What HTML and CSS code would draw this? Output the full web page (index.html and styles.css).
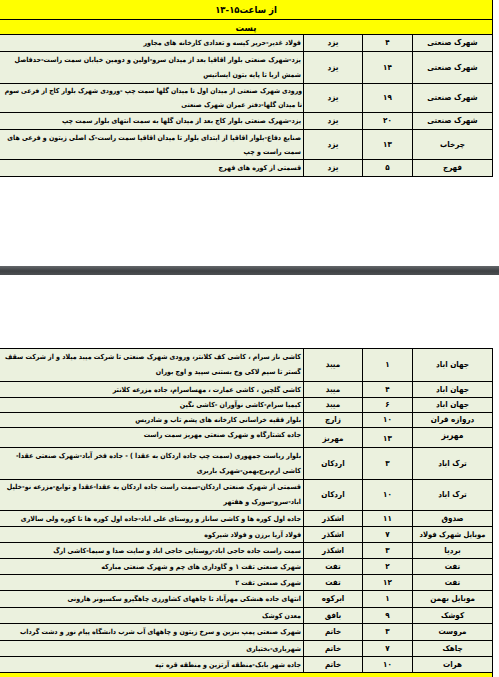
FILE: index.html
```html
<!DOCTYPE html>
<html lang="fa">
<head>
<meta charset="utf-8">
<link rel="stylesheet" href="styles.css">
</head>
<body>
<section class="upper">
  <div class="sheet">
    <div class="row band h20"><span>از ساعت۱۵-۱۳</span></div>
    <div class="row band h15"><span>پست</span></div>
    <div class="row h17"><div class="cell">شهرک صنعتی</div><div class="cell num">۴</div><div class="cell">یزد</div><div class="cell desc"><span>فولاد غدیر-حریر کیسه و تعدادی کارخانه های مجاور</span></div></div>
    <div class="row h32 two"><div class="cell">شهرک صنعتی</div><div class="cell num">۱۴</div><div class="cell">یزد</div><div class="cell desc"><span>یزد-شهرک صنعتی بلوار اقاقیا بعد از میدان سرو-اولین و دومین خیابان سمت راست-حدفاصل<br>شمش اریا تا پایه بتون ایساتیس</span></div></div>
    <div class="row h29 two"><div class="cell">شهرک صنعتی</div><div class="cell num">۱۹</div><div class="cell">یزد</div><div class="cell desc tight"><span>ورودی شهرک صنعتی از میدان اول تا میدان گلها سمت چپ -ورودی شهرک بلوار کاج از فرعی سوم<br>تا میدان گلها-دفتر عمران شهرک صنعتی</span></div></div>
    <div class="row h17"><div class="cell">شهرک صنعتی</div><div class="cell num">۲۰</div><div class="cell">یزد</div><div class="cell desc"><span>یزد-شهرک صنعتی بلوار کاج بعد از میدان گلها  به سمت انتهای بلوار سمت چپ</span></div></div>
    <div class="row h30 two"><div class="cell">چرخاب</div><div class="cell num">۱۳</div><div class="cell">یزد</div><div class="cell desc"><span>صنایع دفاع-بلوار اقاقیا از ابتدای بلوار تا میدان اقاقیا سمت راست-ک اصلی زیتون و فرعی های<br>سمت راست و چپ</span></div></div>
    <div class="row h17"><div class="cell">فهرج</div><div class="cell num">۵</div><div class="cell">یزد</div><div class="cell desc"><span>قسمتی از کوره های فهرج</span></div></div>
  </div>
</section>

<div class="divider"></div>

<section class="lower">
  <div class="sheet ruled">
    <div class="row h33 two"><div class="cell">جهان اباد</div><div class="cell num">۱</div><div class="cell">میبد</div><div class="cell desc"><span>کاشی ناز سرام ، کاشی کف کلانتر، ورودی شهرک صنعتی تا شرکت میبد میلاد و از شرکت سقف<br>گستر تا سیم لاکی وخ بستنی سپید و اوج بوران</span></div></div>
    <div class="row h16"><div class="cell">جهان اباد</div><div class="cell num">۴</div><div class="cell">میبد</div><div class="cell desc"><span>کاشی گلچین ، کاشی عمارت ، مهساسرام، جاده مزرعه کلانتر</span></div></div>
    <div class="row h15"><div class="cell">جهان اباد</div><div class="cell num">۶</div><div class="cell">میبد</div><div class="cell desc"><span>کیمیا سرام-کاشی نوآوران -کاشی نگین</span></div></div>
    <div class="row h15"><div class="cell">دروازه قران</div><div class="cell num">۱۰</div><div class="cell">زارچ</div><div class="cell desc"><span>بلوار فقیه خراسانی کارخانه های پشم تاب و شادریس</span></div></div>
    <div class="row h20"><div class="cell top big">مهریز</div><div class="cell num low">۱۳</div><div class="cell low">مهریز</div><div class="cell desc top"><span>جاده کشتارگاه و شهرک صنعتی مهریز سمت راست</span></div></div>
    <div class="row h32 two"><div class="cell">ترک اباد</div><div class="cell num">۳</div><div class="cell">اردکان</div><div class="cell desc"><span>بلوار ریاست جمهوری (سمت چپ جاده اردکان به عقدا ) - جاده فخر آباد-شهرک صنعتی عقدا-<br>کاشی ارم‌برج‌بهمن-شهرک باربری</span></div></div>
    <div class="row h31 two"><div class="cell">ترک اباد</div><div class="cell num">۱۰</div><div class="cell">اردکان</div><div class="cell desc"><span>قسمتی از شهرک صنعتی اردکان-سمت راست جاده اردکان به عقدا-عقدا و توابع-مزرعه نو-خلیل<br>اباد-سرو-سورک و هفتهر</span></div></div>
    <div class="row h16"><div class="cell">صدوق</div><div class="cell num">۱۱</div><div class="cell">اشکذر</div><div class="cell desc"><span>جاده اول کوره ها و کاشی ساناز و روستای علی اباد-جاده اول کوره ها تا کوره ولی سالاری</span></div></div>
    <div class="row h16"><div class="cell long">موبایل شهرک فولاد</div><div class="cell num">۷</div><div class="cell">اشکذر</div><div class="cell desc"><span>فولاد آریا برزن و فولاد شیرکوه</span></div></div>
    <div class="row h16"><div class="cell">بردیا</div><div class="cell num">۳</div><div class="cell">اشکذر</div><div class="cell desc"><span>سمت راست جاده حاجی اباد-روستایی حاجی اباد و سایت صدا و سیما-کاشی ارگ</span></div></div>
    <div class="row h16"><div class="cell">تفت</div><div class="cell num">۲</div><div class="cell">تفت</div><div class="cell desc"><span>شهرک صنعتی تفت ۱ و گاوداری های چم و شهرک صنعتی مبارکه</span></div></div>
    <div class="row h16"><div class="cell">تفت</div><div class="cell num">۱۲</div><div class="cell">تفت</div><div class="cell desc"><span>شهرک صنعتی تفت ۲</span></div></div>
    <div class="row h17"><div class="cell">موبایل بهمن</div><div class="cell num">۱</div><div class="cell">ابرکوه</div><div class="cell desc"><span>انتهای جاده هنشکی مهرآباد تا چاههای کشاورزی چاهگیرو سکسیونر هارونی</span></div></div>
    <div class="row h16"><div class="cell">کوشک</div><div class="cell num">۹</div><div class="cell">بافق</div><div class="cell desc"><span>معدن کوشک</span></div></div>
    <div class="row h17"><div class="cell">مروست</div><div class="cell num">۳</div><div class="cell">خاتم</div><div class="cell desc"><span>شهرک صنعتی پمپ بنزین و سرخ زیتون و چاههای آب شرب دانشگاه پیام نور و دشت گرداب</span></div></div>
    <div class="row h16"><div class="cell">چاهک</div><div class="cell num">۷</div><div class="cell">خاتم</div><div class="cell desc"><span>شهریاری-بختیاری</span></div></div>
    <div class="row h16"><div class="cell">هرات</div><div class="cell num">۱۰</div><div class="cell">خاتم</div><div class="cell desc"><span>جاده شهر بابک-منطقه آرتزین و منطقه قره تپه</span></div></div>
    <div class="row band h16"><span></span></div>
  </div>
</section>
</body>
</html>
```

FILE: styles.css
```css
html, body {
  margin: 0;
  padding: 0;
  background: #ffffff;
}

body {
  width: 499px;
  height: 677px;
  overflow: hidden;
  font-family: "DejaVu Sans Condensed", "DejaVu Sans", sans-serif;
  font-weight: bold;
  font-size: 8px;
  color: #000;
}

.upper {
  height: 266px;
}

.divider {
  height: 9px;
  width: 499px;
  background: linear-gradient(#64676a, #3e4144 55%, #4c4f52);
}

.lower {
  margin-top: 73px;
}

.sheet {
  width: 493px;
  box-sizing: border-box;
  direction: rtl;
  border-right: 1px solid #000;
}

.sheet.ruled {
  border-top: 1px solid #000;
}

.row {
  display: grid;
  grid-template-columns: 80px 50px 59px 303px;
  box-sizing: border-box;
  border-bottom: 1px solid #000;
  background: #ebf1de;
}

.cell {
  display: flex;
  align-items: center;
  justify-content: center;
  border-left: 1px solid #000;
  white-space: nowrap;
  overflow: hidden;
  line-height: 12px;
}

.cell.long {
  font-size: 7.5px;
}

.cell.num {
  font-size: 8px;
}

.cell.desc {
  border-left: none;
  justify-content: flex-start;
  padding-right: 2px;
  font-size: 7px;
}

.cell.desc.tight {
  font-size: 6.8px;
  padding-right: 1px;
}

.row.two .cell.desc { line-height: 15px; }
.row.h29 .cell.desc, .row.h30 .cell.desc { line-height: 14px; }

.cell.top {
  align-items: flex-start;
  padding-top: 1px;
}

.cell.low {
  padding-top: 3px;
}

.cell.big {
  font-size: 8.5px;
}

.row.band {
  display: flex;
  align-items: center;
  justify-content: center;
  background: #ffff00;
  font-size: 9.5px;
}

.h15 { height: 15px; }
.h16 { height: 16px; }
.h17 { height: 17px; }
.h20 { height: 20px; }
.h29 { height: 29px; }
.h30 { height: 30px; }
.h31 { height: 31px; }
.h32 { height: 32px; }
.h33 { height: 33px; }
```
